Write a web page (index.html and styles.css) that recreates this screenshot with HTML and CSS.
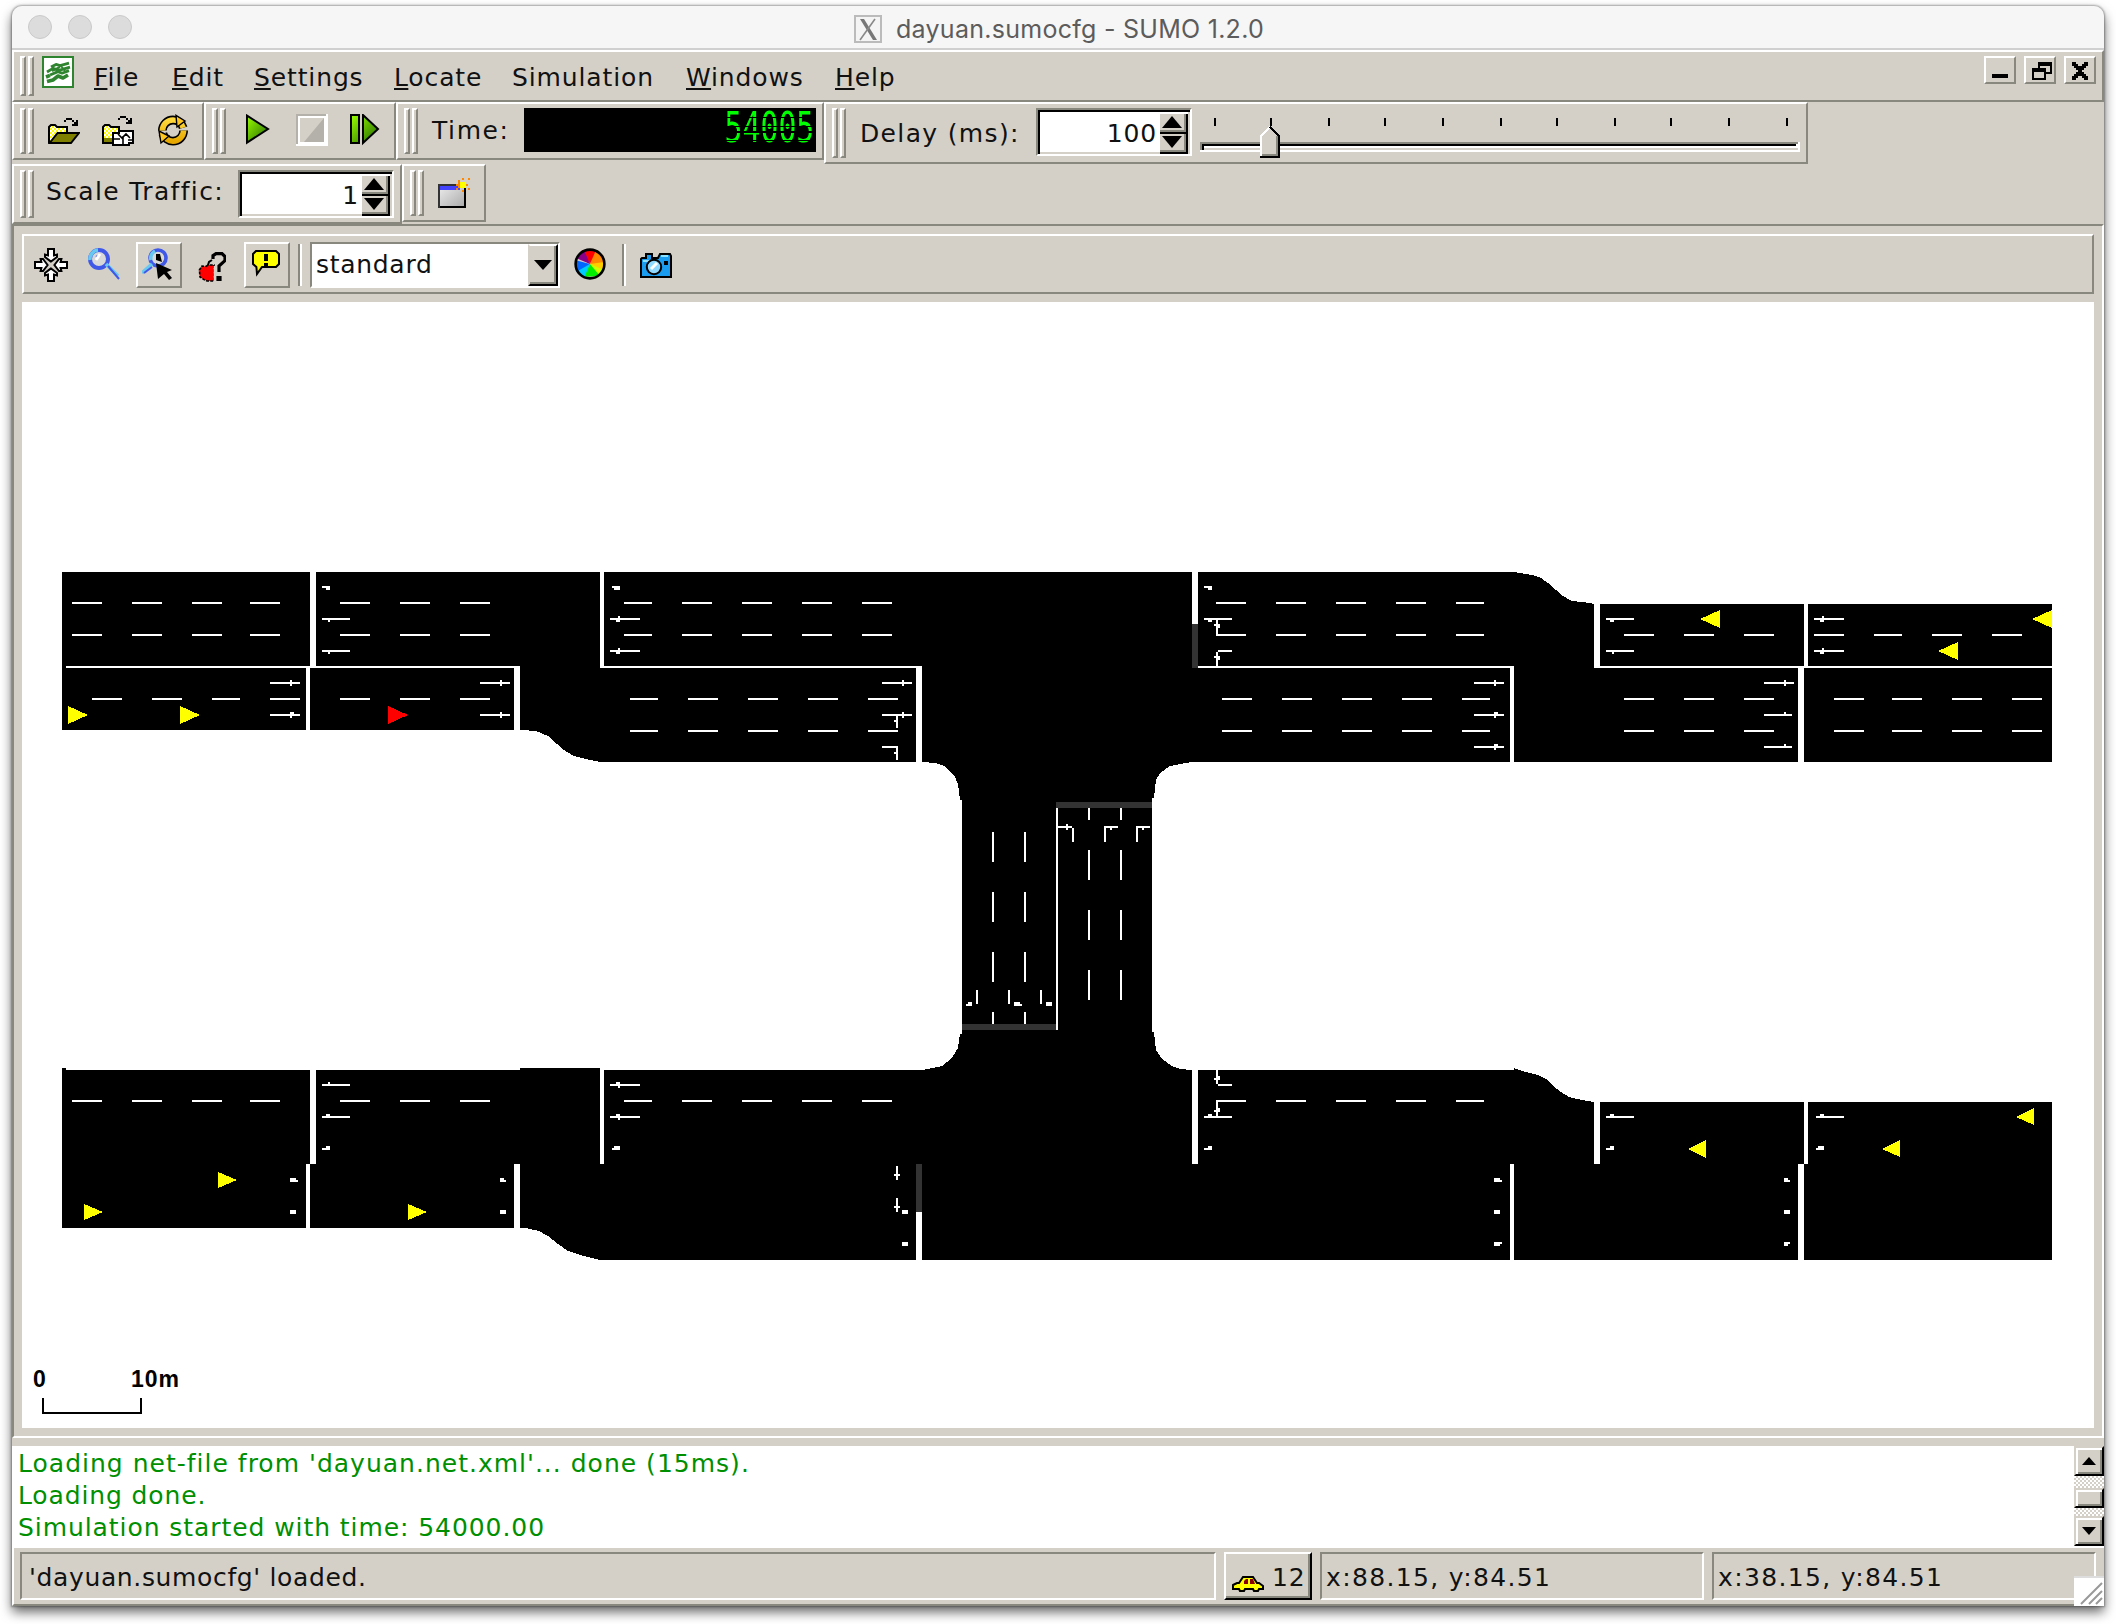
FILE: index.html
```html
<!DOCTYPE html>
<html lang="en">
<head>
<meta charset="utf-8">
<title>dayuan.sumocfg - SUMO 1.2.0</title>
<link rel="stylesheet" href="styles.css">
</head>
<body>
<svg class="defs" width="0" height="0" aria-hidden="true">
  <defs>
    <pattern id="dither" width="2" height="2" patternUnits="userSpaceOnUse"><rect width="2" height="2" fill="#fff"/><path fill="#ff0" d="M0 0h1v1H0zM1 1h1v1H1z"/></pattern>
    <linearGradient id="green" x1="0" y1="0" x2="1" y2="1"><stop offset="0" stop-color="#9f0"/><stop offset="1" stop-color="#260"/></linearGradient>
    <linearGradient id="gold" x1="0" y1="0" x2="0" y2="1"><stop offset="0" stop-color="#ffd83c"/><stop offset="1" stop-color="#e6a800"/></linearGradient>
    <linearGradient id="silver" x1="0" y1="0" x2="1" y2="1"><stop offset="0" stop-color="#eee"/><stop offset="1" stop-color="#aaa"/></linearGradient>
  </defs>
</svg>
<div class="window">
  <header class="titlebar">
    <span class="lights"><i></i><i></i><i></i></span>
    <svg class="xicon" width="28" height="28" viewBox="0 0 28 28"><rect x="1" y="1" width="26" height="26" fill="#f4f4f4" stroke="#bbb" stroke-width="2"/><path d="M6 4h4L23 25h-4z" fill="#777"/><path d="M21 4L6 25" stroke="#888" stroke-width="1.6"/></svg>
    <span class="title">dayuan.sumocfg - SUMO 1.2.0</span>
  </header>

  <nav class="menubar raised">
    <span class="grip"></span>
    <svg class="app" width="32" height="32" viewBox="0 0 16 16"><rect x=".5" y=".5" width="15" height="15" fill="#fff" stroke="#2f842f"/><g fill="none" stroke="#2f842f" stroke-linejoin="round"><path stroke-width="1.4" d="M4.500 5.500L7 4.200l2 .6L13.500 3.600M2.500 8l3-1.800 3 1L14 5.600M4 9.500L8 7.800l2 .8 3.500-1.300"/><path stroke-width="1.800" d="M2 10.500l2-.8M2.500 12.800L5.500 12l2.500-2 2.500 1L13 9.500"/><path stroke-width="1" d="M5 7.500l4-2M9.500 5l2 2.500"/></g></svg>
    <span class="menus">
      <span class="m1"><u>F</u>ile</span><span class="m2"><u>E</u>dit</span><span class="m3"><u>S</u>ettings</span><span class="m4"><u>L</u>ocate</span><span class="m5">Simulation</span><span class="m6"><u>W</u>indows</span><span class="m7"><u>H</u>elp</span>
    </span>
    <span class="winbtns">
      <svg class="raised" width="32" height="28" viewBox="1 1 14 12"><path d="M4 9h8v2H4z"/></svg>
      <svg class="raised" width="32" height="28" viewBox="1 1 14 12"><path d="M7 3h7v6h-3V8h2V5H8v1H7zM4 6h7v6H4zM5 8v3h5V8z" fill-rule="evenodd"/></svg>
      <svg class="raised" width="32" height="28" viewBox="1 1 14 12"><path d="M4 3h2v1h1v1h2V4h1V3h2v2h-1v1h-1v1H9v1h1v1h1v1h1v2h-2v-1H9v-1H7v1H6v1H4v-2h1V9h1V8h1V7H6V6H5V5H4z"/></svg>
    </span>
  </nav>

  <div class="dock row1">
    <div class="toolbar raised w192">
      <span class="grip"></span>
      <div class="icons i14">
        <svg width="32" height="32" viewBox="0 0 16 16"><path d="M8 3h1V2h3v1h1v1h1V3h1v3h-3V5h1V4h-1V3H9v1H8z"/><path d="M.5 14.500V6.500l1-1h2l1 1h5v3" fill="url(#dither)" stroke="#000"/><path d="M.8 14.500l4-5H15.500l-4 5z" fill="#808000" stroke="#000"/></svg>
        <svg width="32" height="32" viewBox="0 0 16 16"><path d="M8 2h1V1h3v1h1v1h1V2h1v3h-3V4h1V3h-1V2H9v1H8z"/><path d="M.5 14.500V6.500l1-1h2l1 1h4v8z" fill="url(#dither)" stroke="#000"/><path d="M1 12h5v2H1z" fill="#808000"/><path d="M8.500 8.500h7v6h-2v1h-8v-6h3z" fill="#fff" stroke="#000"/><path d="M6 12.500h3M10.500 11v4M8 10l2 2 2-2 2 2M13 13h2" stroke="#000" fill="none" stroke-width=".8"/></svg>
        <svg width="32" height="32" viewBox="-1 0 16 16"><circle cx="7.500" cy="8.300" r="5.300" fill="none" stroke="#000" stroke-width="4.400" stroke-dasharray="15 1.600"/><circle cx="7.500" cy="8.300" r="5.300" fill="none" stroke="url(#gold)" stroke-width="2.800" stroke-dasharray="15 1.600"/><path d="M9 .7L13.500 3.500 9.500 6.500zM.5 8.500l1 6 4-3.500z" fill="#ffc61e" stroke="#000" stroke-width=".7"/></svg>
      </div>
    </div>
    <div class="toolbar raised w192">
      <span class="grip"></span>
      <div class="icons i16">
        <svg width="32" height="32" viewBox="0 0 16 16"><path d="M2.500.8L13 7.500 2.500 14.300z" fill="url(#green)" stroke="#000"/></svg>
        <svg width="32" height="32" viewBox="0 0 16 16"><path d="M0 0h16v16H0z" fill="#fff"/><path d="M0 0h15v1H1v14H0z" fill="#b4b1aa"/><path d="M2 2h12v12H2z" fill="#d4d0c8"/><path d="M14 2v12H4z" fill="#b4b1aa"/></svg>
        <svg width="32" height="32" viewBox="0 0 16 16"><path d="M.5.5h4v14h-4zM6.500.5L14 7.500l-7.500 7z" fill="url(#green)" stroke="#000"/></svg>
      </div>
    </div>
    <div class="toolbar raised time">
      <span class="grip"></span>
      <span class="label tlabel">Time:</span>
      <span class="lcd"><b>54005</b></span>
    </div>
    <div class="toolbar raised delay">
      <span class="grip"></span>
      <span class="label dlabel">Delay (ms):</span>
      <span class="spin"><span class="val">100</span><span class="arrows"><i><svg width="20" height="12" viewBox="0 0 20 12"><path d="M10 0L20 12H0z"/></svg></i><i><svg width="20" height="12" viewBox="0 0 20 12"><path d="M10 12L20 0H0z"/></svg></i></span></span>
      <svg class="slider" width="604" height="46" viewBox="1198 112 604 46" shape-rendering="crispEdges">
        <path stroke="#000" stroke-width="2" d="M1215 118v8M1271 118v8M1329 118v8M1385 118v8M1443 118v8M1501 118v8M1557 118v8M1615 118v8M1671 118v8M1729 118v8M1787 118v8"/>
        <path fill="#fff" d="M1200 142h600v10h-600z"/><path fill="#89887f" d="M1200 142h598v2h-596v6h-2z"/><path d="M1202 144h594v2h-592v4h-2z"/><path fill="#d4d0c8" d="M1204 148h594v2h-594z"/>
        <path fill="#d4d0c8" d="M1260 158v-22l10-10 10 10v22z"/><path fill="none" stroke="#fff" stroke-width="2" d="M1261 156v-20l9-9"/><path fill="none" stroke="#89887f" stroke-width="2" d="M1262 155h15v-19"/><path fill="none" stroke="#000" stroke-width="2" d="M1260 157h19v-21l-9-9"/>
      </svg>
    </div>
  </div>

  <div class="dock row2">
    <div class="toolbar raised scale">
      <span class="grip"></span>
      <span class="label slabel">Scale Traffic:</span>
      <span class="spin"><span class="val">1</span><span class="arrows"><i><svg width="20" height="12" viewBox="0 0 20 12"><path d="M10 0L20 12H0z"/></svg></i><i><svg width="20" height="12" viewBox="0 0 20 12"><path d="M10 12L20 0H0z"/></svg></i></span></span>
    </div>
    <div class="toolbar raised newview">
      <span class="grip"></span>
      <svg class="nv" width="32" height="32" viewBox="0 0 16 16"><path d="M.5 3.500h13v11H.5z" fill="url(#silver)" stroke="#333"/><path d="M1 4h10v2H1z" fill="#44f"/><path d="M1 14.500h13M13.500 4v11" stroke="#000"/><g fill="#f80"><path d="M15 0h1v1h-1zM12 0h1v1h-1zM9 5h1v1H9zM15 5h1v1h-1zM10 1h1v1h-1zM9 3h6v1H9zM10 4h4v1h-4zM10 2h4v1h-4zM12 6h1v1h-1z"/></g><path d="M11 2h3v3h-3z" fill="#ff0"/></svg>
    </div>
  </div>

  <main class="mdi">
    <div class="viewbar raised">
      <svg class="v1" width="34" height="34" viewBox="0 0 17 17"><g fill="#fff" stroke="#000"><path d="M8.500 6.800L5.500 4.500V3.300l1.500.4V.5h3v3.200l1.500-.4v1.200z"/><path d="M8.500 10.200l-3 2.300v1.200l1.500-.4v3.200h3v-3.200l1.500.4v-1.200z"/><path d="M6.800 8.500L4.500 5.500H3.300l.4 1.500H.5v3h3.200l-.4 1.500h1.200z"/><path d="M10.200 8.500l2.300-3h1.200l-.4 1.500h3.200v3h-3.200l.4 1.500h-1.200z"/></g></svg>
      <svg class="v2" width="32" height="32" viewBox="0 0 16 16"><circle cx="5.500" cy="5.500" r="4.500" fill="#d8d8d8" stroke="#4058e8" stroke-width="2"/><path d="M1 6a4.500 4.500 0 0 1 4-5M9 8l6 6" fill="none" stroke="#68c8f0" stroke-width="1.800"/><path d="M10 9l5.500 6.500M4 4.500L6 3.500" stroke="#4058e8"/><path d="M4 6l2-3" stroke="#fff" stroke-width="1.500"/></svg>
      <span class="tbtn raised"><svg width="32" height="32" viewBox="0 0 16 16"><circle cx="8" cy="5" r="4" fill="#d8d8d8" stroke="#4058e8" stroke-width="1.800"/><path d="M5 8l-5 4.500M4.500 6a4 4 0 0 1 2-4.500" fill="none" stroke="#68c8f0" stroke-width="1.800"/><path d="M5 9.500l-4 3" stroke="#4058e8"/><path d="M7 3h2l1 4-3-1z"/><path d="M7 7.500l8 3.500-2.500 1 2.500 3-1.500 1-2.500-3-3 2.500z"/></svg></span>
      <svg class="v4" width="28" height="30" viewBox="0 0 14 15"><path d="M4 7.200L5 6.500h3v8H4.500L3 13.800 1 12.500.7 9 2 7z" fill="red" stroke="#000" stroke-width=".8" stroke-dasharray="1.500 .6"/><path d="M5 6.500L5.500 5 7 4" fill="none" stroke="#000"/><path d="M7.500 3.500V1.800L9 .8h3l1.500 1.500v2L10.500 7v3" fill="none" stroke="#000" stroke-width="1.600"/><path d="M8.200 7v8" stroke="#d4d0c8" stroke-width=".8"/><path d="M9.200 12h2.600v2.500H9.200z"/></svg>
      <span class="tbtn raised b5"><svg width="32" height="32" viewBox="0 0 16 16"><path d="M3 1.500h10l1.500 1.500v5L13 9.500H6L3.500 13 3.200 9.500 1.500 8V3z" fill="#ff0" stroke="#000"/><path d="M7 3h2v3.500H7zM7 7.500h2V9H7z"/></svg></span>
      <span class="sep s1"></span>
      <span class="combo"><span class="ctext">standard</span><span class="cbtn"><svg width="18" height="10" viewBox="0 0 18 10"><path d="M0 0h18L9 10z"/></svg></span></span>
      <svg class="wheel" width="32" height="32" viewBox="-8 -8 16 16"><g><path fill="red" d="M0 0L-4-7H4z"/><path fill="#f80" d="M0 0L3-7 7-4 7 1z"/><path fill="#fc0" d="M0 0L7-1 6 5z"/><path fill="#cf0" d="M0 0L7 3 4 6z"/><path fill="#0e0" d="M0 0L5 6-4 6.500z"/><path fill="#0cf" d="M0 0L-3 7-7 3z"/><path fill="#06f" d="M0 0L-7 4-7.500-2z"/><path fill="#808" d="M0 0L-7-3-3-7z"/></g><circle r="7.200" fill="none" stroke="#000" stroke-width="1.300"/></svg>
      <span class="sep s2"></span>
      <svg class="cam" width="32" height="28" viewBox="0 0 16 14"><path d="M1 3.500h2V1.500h3v2h3l1-2h5l.5 1v10.500H.5V4z" fill="#1a9cf0" stroke="#000"/><path d="M10.500 2.500H14M1.500 5H5" stroke="#8fe0ff"/><circle cx="7" cy="8" r="3.600" fill="#8fd8ff" stroke="#000"/><path d="M5.500 9l3-3" stroke="#fff" stroke-width="1.500"/><path d="M12 5h2v2h-2z"/></svg>
    </div>
    <svg class="canvas" width="2072" height="1126" viewBox="22 302 2072 1126" shape-rendering="crispEdges">
      <rect x="22" y="302" width="2072" height="1126" fill="#fff"/>
      <!-- road surface -->
      <path d="M62 572H1514L1532 575 1541 578 1548 583 1556 590 1563 596 1572 601 1590 603 1594 604H2052V762H1192L1180 764 1170 766 1160 773 1156 780 1154 798H1152V1032H1154L1156 1050 1162 1059 1172 1066 1180 1069 1192 1070H1514V1068L1522 1071 1538 1075 1546 1079 1553 1086 1561 1092 1569 1097 1582 1100 1594 1102H2052V1260H600L584 1256 568 1251 558 1244 548 1236 539 1231 526 1228H62V1068H66V1070H520V1068H604V1070H922L942 1066 952 1058 958 1048 960 1034H962V800H960L958 784 954 775 944 766 936 763 922 762H600L586 759 574 756 564 750 557 744 548 736 536 731 522 730H62Z"/>
      <!-- stop lines and borders -->
      <path fill="#fff" d="M310 572h6v94h-6zM66 666h454v2H66zM306 668h4v62h-4zM514 666h6v64h-6zM600 572h4v96h-4zM600 666h322v2H600zM916 666h6v96h-6zM1192 572h6v52h-6zM1198 666h316v2h-316zM1510 666h4v96h-4zM1594 602h6v66h-6zM1594 666h458v2h-458zM1804 604h4v62h-4zM1798 666h6v96h-6z"/>
      <path fill="#fff" d="M310 1070h6v94h-6zM600 1068h4v96h-4zM306 1164h4v64h-4zM514 1164h6v64h-6zM916 1212h6v48h-6zM1192 1070h6v94h-6zM1510 1164h4v96h-4zM1594 1100h6v64h-6zM1804 1102h4v62h-4zM1798 1164h6v96h-6zM1056 808h2v222h-2z"/>
      <path fill="#333" d="M1192 624h6v44h-6zM1056 802h96v6h-96zM962 1024h94v6h-94zM916 1164h6v48h-6z"/>
      <!-- lane dashes -->
      <g fill="none" stroke="#fff" stroke-width="2">
        <path d="M72 603h30M132 603h30M192 603h30M250 603h30M340 603h30M400 603h30M460 603h30M624 603h28M682 603h30M742 603h30M802 603h30M862 603h30M1216 603h30M1276 603h30M1336 603h30M1396 603h30M1456 603h28"/>
        <path d="M72 635h30M132 635h30M192 635h30M250 635h30M340 635h30M400 635h30M460 635h30M624 635h28M682 635h30M742 635h30M802 635h30M862 635h30M1216 635h30M1276 635h30M1336 635h30M1396 635h30M1456 635h28M1624 635h30M1684 635h30M1744 635h30M1814 635h30M1874 635h28M1932 635h30M1992 635h30"/>
        <path d="M92 699h30M152 699h30M212 699h28M270 699h30M340 699h30M400 699h30M460 699h30M630 699h28M688 699h30M748 699h30M808 699h30M868 699h30M1222 699h30M1282 699h30M1342 699h30M1402 699h30M1462 699h28M1624 699h30M1684 699h30M1744 699h30M1834 699h30M1892 699h30M1952 699h30M2012 699h30"/>
        <path d="M630 731h28M688 731h30M748 731h30M808 731h30M868 731h30M1222 731h30M1282 731h30M1342 731h30M1402 731h30M1462 731h28M1624 731h30M1684 731h30M1744 731h30M1834 731h30M1892 731h30M1952 731h30M2012 731h30"/>
        <path d="M72 1101h30M132 1101h30M192 1101h30M250 1101h30M340 1101h30M400 1101h30M460 1101h30M624 1101h28M682 1101h30M742 1101h30M802 1101h30M862 1101h30M1216 1101h30M1276 1101h30M1336 1101h30M1396 1101h30M1456 1101h28"/>
        <path d="M993 832v30M1025 832v30M993 892v30M1025 892v30M993 952v30M1025 952v30M993 1012v12M1025 1012v12M1089 808v12M1121 808v12M1089 850v30M1121 850v30M1089 910v30M1121 910v30M1089 970v30M1121 970v30"/>
        <!-- turn arrows -->
        <path d="M322 587h8M326 589h4M322 619h28M328 621h2M322 651h28M328 653h2M612 587h8M614 589h6M610 619h30M619 616v6M616 621h4M610 651h30M619 648v6M616 653h4M270 683h30M291 680v6M270 715h30M291 712v6M290 713h4M480 683h30M501 680v6M480 715h30M501 712v6M882 683h30M903 680v6M882 715h30M903 712v6M897 716v12M894 721h2M882 747h16M897 748v12M894 753h2"/>
        <path d="M1204 587h8M1208 589h4M1204 619h28M1208 621h4M1217 620v16M1214 625h6M1216 627h4M1218 651h14M1217 652v14M1214 657h6M1216 659h4M1606 619h28M1610 621h4M1606 651h28M1612 653h2M1814 619h30M1823 616v6M1820 621h4M1814 651h30M1823 648v6M1820 653h4M1474 683h30M1495 680v6M1474 715h30M1495 712v6M1494 713h4M1474 747h30M1495 744v6M1494 745h4M1764 683h30M1785 680v6M1764 715h28M1785 712v2M1764 747h28M1785 744v2"/>
        <path d="M1058 827h14M1067 824v6M1073 828v14M1104 827h14M1105 828v14M1110 829h2M1136 827h14M1137 828v14M1142 829h2M977 990v14M1009 990v14M1041 990v14M966 1005h6M968 1003h4M1014 1003h6M1014 1005h8M1046 1003h6M1046 1005h6"/>
        <path d="M322 1085h28M329 1082v2M322 1117h28M326 1115h4M322 1149h8M326 1147h4M610 1085h30M619 1082v6M616 1083h4M610 1117h30M619 1114v6M616 1115h4M612 1149h8M614 1147h6M290 1179h6M290 1181h8M290 1211h6M290 1213h6M500 1179h4M500 1181h6M500 1211h6M500 1213h6M897 1166v14M894 1175h6M896 1173h2M897 1198v14M894 1207h6M902 1211h6M902 1213h6M902 1243h6M902 1245h6"/>
        <path d="M1217 1070v14M1214 1079h6M1216 1077h4M1218 1085h14M1217 1102v14M1214 1111h6M1216 1109h4M1204 1117h28M1208 1115h4M1204 1149h8M1208 1147h4M1606 1117h28M1610 1115h4M1606 1149h8M1610 1147h4M1816 1117h28M1820 1115h4M1816 1149h8M1818 1147h6M1494 1179h6M1494 1181h8M1494 1211h6M1494 1213h6M1494 1243h8M1494 1245h6M1784 1179h4M1784 1181h6M1784 1211h6M1784 1213h6M1784 1243h6M1784 1245h4"/>
      </g>
      <!-- vehicles -->
      <path fill="#ff0" d="M68 706l20 9-20 9zM180 706l20 9-20 9zM1720 610l-20 9 20 9zM2052 610l-20 9 20 9zM1958 642l-20 9 20 9zM2034 1108l-18 9 18 8zM1706 1140l-18 9 18 9zM1900 1140l-18 9 18 8zM218 1172l19 8-19 8zM84 1204l19 8-19 8zM408 1204l19 8-19 8z"/>
      <path fill="red" d="M388 706l20 9-20 9z"/>
      <!-- scale legend -->
      <path fill="none" stroke="#000" stroke-width="2" d="M43 1398v15h98v-15"/>
      <text class="legend" x="33" y="1387">0</text><text class="legend ten" x="131" y="1387">10m</text>
    </svg>
  </main>

  <section class="log">
    <div class="lines"><p class="l1">Loading net-file from 'dayuan.net.xml'... done (15ms).</p><p class="l2">Loading done.</p><p class="l3">Simulation started with time: 54000.00</p></div>
    <div class="scroll">
      <span class="sb"><svg width="14" height="8" viewBox="0 0 14 8"><path d="M7 0l7 8H0z"/></svg></span>
      <span class="sb thumb"></span>
      <span class="sb"><svg width="14" height="8" viewBox="0 0 14 8"><path d="M7 8l7-8H0z"/></svg></span>
    </div>
  </section>

  <footer class="status">
    <span class="field f1">'dayuan.sumocfg' loaded.</span>
    <span class="carbtn"><svg width="32" height="16" viewBox="0 0 16 8"><path d="M.5 4.500l2-1h1l2-3h5l2 3h1l2 1.500v1.500h-2l-.5 1h-2l-.5-1h-4l-.5 1h-2l-.5-1h-3z" fill="#ff0" stroke="#000"/><path d="M6 4V2.500L7 1.500h1V4zM9 4V1.500h1.500L11.500 4z" fill="#800"/></svg><span>12</span></span>
    <span class="field f2">x:88.15, y:84.51</span>
    <span class="field f3">x:38.15, y:84.51</span>
    <svg class="resize" width="30" height="30" viewBox="0 0 30 30"><path d="M0 0h30v30H0z" fill="#fff"/><path d="M0 1h30" stroke="#ddd" stroke-width="2"/><path d="M7 28L28 7M15 28L28 15M22 28l6-6" stroke="#999" stroke-width="2"/></svg>
  </footer>
</div>
</body>
</html>
```
FILE: styles.css
```css
* { box-sizing: border-box; }
body {
  margin: 0;
  background: #fff;
  width: 2116px;
  height: 1624px;
  overflow: hidden;
  font: 25px/32px "DejaVu Sans", "Liberation Sans", sans-serif;
  letter-spacing: .87px;
  color: #111;
  padding: 6px 12px;
}
svg { display: block; flex: none; }
.defs { position: absolute; }
.window {
  width: 2092px;
  height: 1600px;
  display: flex;
  flex-direction: column;
  background: #d4d0c8;
  border-radius: 10px 10px 0 0;
  box-shadow: 0 0 2px 1px rgba(0, 0, 0, .3), 0 6px 12px 0 rgba(0, 0, 0, .6);
}
.raised { border: 2px solid; border-color: #fff #89887f #89887f #fff; }

.titlebar {
  height: 44px;
  display: flex;
  align-items: center;
  background: #f6f6f6;
  border-bottom: 2px solid #d0d0d0;
  border-radius: 10px 10px 0 0;
}
.lights { display: flex; gap: 16px; padding-left: 16px; width: 842px; }
.lights i { width: 24px; height: 24px; border-radius: 50%; background: #dcdcdc; border: 1px solid #cacaca; }
.xicon { margin-top: 3px; }
.title {
  font-family: Inter, "Liberation Sans", sans-serif;
  font-size: 25px;
  letter-spacing: .27px;
  color: #5c5c5c;
  padding: 3px 0 0 14px;
}

.grip { display: flex; gap: 2px; width: 14px; flex: none; }
.grip::before, .grip::after {
  content: "";
  width: 6px;
  border: 2px solid;
  border-color: #fff #89887f #89887f #fff;
}
.menubar { height: 52px; display: flex; align-items: flex-start; padding: 4px 6px; }
.menubar .grip { height: 40px; }
.app { margin-left: 8px; }
.menus { display: flex; padding: 6px 0 0 20px; flex: 1; }
.menus u { text-decoration-thickness: 2px; text-underline-offset: 2px; text-decoration-skip-ink: none; }
.m1 { width: 78px; } .m2 { width: 82px; } .m3 { width: 140px; } .m4 { width: 118px; } .m5 { width: 174px; } .m6 { width: 149px; }
.winbtns { display: flex; gap: 8px; }

.dock { display: flex; align-items: flex-start; }
.row1 { height: 62px; }
.row2 { height: 60px; }
.toolbar { height: 58px; padding: 4px 6px; display: flex; align-items: flex-start; }
.toolbar .grip { height: 46px; }
.w192 { width: 192px; }
.icons { display: flex; gap: 22px; padding-top: 6px; }
.i14 { padding-left: 14px; }
.i16 { padding-left: 16px; }
.time { width: 428px; }
.label { white-space: nowrap; flex: none; }
.tlabel { width: 106px; padding: 7px 0 0 14px; letter-spacing: 1.6px; }
.lcd {
  width: 292px;
  height: 44px;
  background: #000;
  color: #0f0;
  display: flex;
  justify-content: flex-end;
}
.lcd b {
  font: 42px/40px "DejaVu Sans Mono", "Liberation Mono", monospace;
  letter-spacing: 0;
  transform: scaleX(.71);
  transform-origin: right center;
  padding-right: 3px;
  height: 40px;
  -webkit-mask-image: linear-gradient(#000 9px, transparent 9px 10px, #000 10px 18px, transparent 18px 19px, #000 19px 23px, transparent 23px 25px, #000 25px 32px, transparent 32px 33px, #000 33px);
  mask-image: linear-gradient(#000 9px, transparent 9px 10px, #000 10px 18px, transparent 18px 19px, #000 19px 23px, transparent 23px 25px, #000 25px 32px, transparent 32px 33px, #000 33px);
}
.delay { width: 984px; height: 62px; }
.delay .grip { height: 50px; }
.dlabel { width: 190px; padding: 10px 0 0 14px; letter-spacing: 1.35px; }
.slider { margin: 4px 0 0 6px; }
.scale { width: 390px; height: 60px; }
.scale .grip { height: 48px; }
.slabel { width: 204px; padding: 6px 0 0 12px; letter-spacing: 1.35px; }
.spin {
  width: 156px;
  height: 48px;
  flex: none;
  display: flex;
  justify-content: flex-end;
  background: #fff;
  border: 2px solid;
  border-color: #89887f #fff #fff #89887f;
  box-shadow: inset 2px 2px #000, inset -2px -2px #d4d0c8;
  padding: 4px 2px 2px;
}
.val { padding: 4px 3px 0 0; }
.arrows { width: 28px; height: 40px; background: #000; display: flex; flex-direction: column; gap: 2px; padding: 0 2px 2px 0; }
.arrows i {
  flex: 1;
  background: #d4d0c8;
  display: flex;
  align-items: center;
  justify-content: center;
  border: solid;
  border-width: 0 2px 2px 0;
  border-color: #89887f;
}
.newview { width: 84px; }
.nv { margin: 8px 0 0 14px; }

.mdi {
  height: 1214px;
  border: 2px solid;
  border-color: #89887f #fff #fff #89887f;
  padding: 8px;
}
.viewbar { height: 60px; display: flex; align-items: flex-start; padding: 6px 10px; margin-bottom: 8px; }
.v1 { margin-top: 6px; }
.v2 { margin: 6px 0 0 20px; }
.tbtn { width: 46px; height: 46px; padding: 4px; margin-left: 16px; flex: none; }
.v4 { margin: 10px 0 0 16px; }
.b5 { margin-left: 18px; }
.sep { width: 4px; height: 42px; margin-top: 2px; background: #fff; border-left: 2px solid #89887f; flex: none; }
.s1 { margin-left: 8px; }
.combo {
  width: 250px;
  height: 46px;
  margin-left: 8px;
  flex: none;
  background: #fff;
  border: 2px solid;
  border-color: #89887f #fff #fff #89887f;
  display: flex;
  justify-content: space-between;
}
.ctext { padding: 5px 0 0 4px; letter-spacing: .7px; }
.cbtn {
  width: 30px;
  background: #d4d0c8;
  display: flex;
  align-items: center;
  justify-content: center;
  border: 2px solid;
  border-color: #fff #000 #000 #d4d0c8;
  box-shadow: inset -2px -2px #89887f;
}
.wheel { margin: 6px 0 0 14px; }
.s2 { margin-left: 16px; }
.cam { margin: 9px 0 0 14px; }
.legend { font: bold 23px "Liberation Sans", sans-serif; letter-spacing: 0; }
.ten { letter-spacing: 1px; }

.log { height: 102px; margin-top: 8px; background: #fff; display: flex; justify-content: space-between; }
.lines { color: #008f00; padding: 2px 0 0 6px; }
.lines p { margin: 0; white-space: nowrap; }
.l1 { letter-spacing: 1.01px; }
.l3 { letter-spacing: .93px; }
.scroll {
  width: 30px;
  height: 100px;
  display: flex;
  flex-direction: column;
  justify-content: space-between;
  background: repeating-conic-gradient(#fff 0 25%, #d4d0c8 0 50%) 0 0 / 4px 4px;
}
.sb {
  height: 30px;
  display: flex;
  align-items: center;
  justify-content: center;
  background: #d4d0c8;
  border: 2px solid;
  border-color: #d4d0c8 #000 #000 #d4d0c8;
  box-shadow: inset 2px 2px #fff, inset -2px -2px #89887f;
}
.thumb { height: 20px; margin-top: 4px; }

.status {
  height: 58px;
  display: flex;
  align-items: flex-start;
  padding: 4px 0 0 6px;
  border: solid;
  border-width: 0 0 2px 2px;
  border-color: #fff #89887f #89887f #fff;
}
.field {
  height: 48px;
  border: 2px solid;
  border-color: #89887f #fff #fff #89887f;
  padding: 8px 0 0 4px;
  white-space: nowrap;
  flex: none;
  letter-spacing: 1.35px;
}
.f1 { width: 1196px; padding-left: 7px; letter-spacing: .64px; }
.carbtn {
  width: 88px;
  height: 48px;
  margin: 0 8px;
  flex: none;
  display: flex;
  border: 2px solid;
  border-color: #fff #000 #000 #fff;
  box-shadow: inset -2px -2px #89887f;
  padding: 8px 0 0 6px;
}
.carbtn svg { margin: 14px 8px 0 0; }
.f2 { width: 384px; }
.f3 { width: 384px; margin-left: 8px; }
.resize { margin: 24px 0 0 -22px; }
```
